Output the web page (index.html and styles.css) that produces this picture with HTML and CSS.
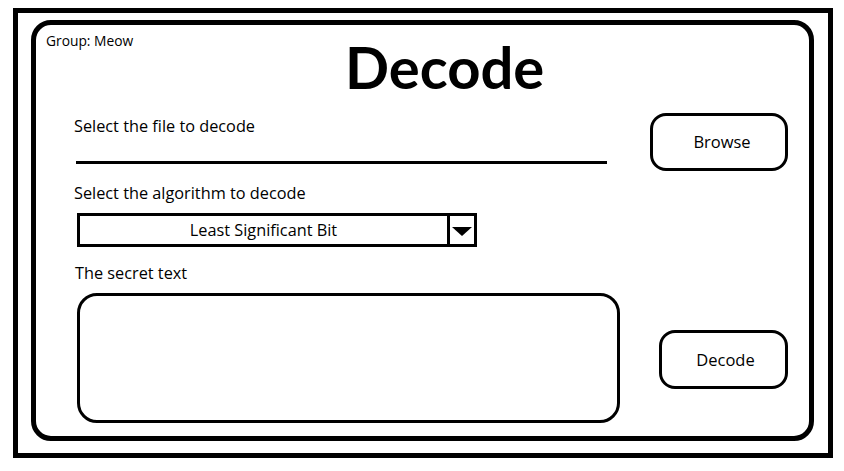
FILE: index.html
```html
<!DOCTYPE html>
<html>
<head>
<meta charset="utf-8">
<link rel="stylesheet" href="styles.css">
</head>
<body>
<div class="frame">
  <div class="panel">
    <div class="header">
      <div class="group">Group: Meow</div>
      <h1 class="title">Decode</h1>
    </div>
    <div class="main">
      <div class="left">
        <div class="label label-file">Select the file to decode</div>
        <div class="file-line"></div>
        <div class="label label-algo">Select the algorithm to decode</div>
        <div class="select">
          <div class="select-value">Least Significant Bit</div>
          <div class="select-arrow"><span class="tri"></span></div>
        </div>
        <div class="label label-secret">The secret text</div>
        <div class="textarea"></div>
      </div>
      <div class="right">
        <div class="btn btn-browse">Browse</div>
        <div class="btn btn-decode">Decode</div>
      </div>
    </div>
  </div>
</div>
</body>
</html>
```
FILE: styles.css
```css
* { box-sizing: border-box; }
html, body { margin: 0; padding: 0; background: #fff; }
body {
  font-family: "Open Sans", Lato, sans-serif;
  color: #000;
}
.frame {
  margin: 8px 0 0 13px;
  width: 820px;
  height: 450px;
  border: 5px solid #000;
  padding: 7px 14px 12px 13px;
}
.panel {
  width: 783px;
  height: 421px;
  border: 5px solid #000;
  border-radius: 20px;
}
.header {
  display: grid;
  grid-template-columns: 309px auto;
  align-items: start;
}
.group {
  font-size: 13.8px;
  line-height: 16px;
  margin-top: 8px;
  padding-left: 10px;
}
.title {
  margin: 13px 0 0 0;
  font-family: Lato, "Open Sans", sans-serif;
  font-size: 58px;
  line-height: 58px;
  font-weight: 700;
}
.main {
  display: flex;
  margin-top: 17px;
  padding-left: 38px;
}
.left {
  width: 546px;
  display: flex;
  flex-direction: column;
}
.label {
  font-size: 16.3px;
  line-height: 19px;
}
.label-file { margin-top: 4px; }
.file-line {
  margin: 25px 0 0 2px;
  width: 531px;
  height: 3px;
  background: #000;
}
.label-algo { margin-top: 20px; }
.select {
  margin: 10px 0 0 3px;
  width: 400px;
  height: 34px;
  border: 3px solid #000;
  display: flex;
}
.select-value {
  flex: 1;
  text-align: center;
  font-size: 16.3px;
  line-height: 29px;
}
.select-arrow {
  width: 27px;
  border-left: 3px solid #000;
  display: flex;
  align-items: center;
  justify-content: center;
}
.tri {
  width: 0;
  height: 0;
  border-left: 10px solid transparent;
  border-right: 10px solid transparent;
  border-top: 9px solid #000;
  margin-top: 2px;
}
.label-secret { margin-top: 17px; margin-left: 1px; }
.textarea {
  margin: 10px 0 0 3px;
  width: 543px;
  height: 130px;
  border: 3px solid #000;
  border-radius: 20px;
}
.right {
  margin-left: 30px;
  width: 138px;
  display: flex;
  flex-direction: column;
  align-items: flex-end;
}
.btn {
  border: 3px solid #000;
  border-radius: 16px;
  display: flex;
  align-items: center;
  justify-content: center;
  font-size: 16.5px;
  line-height: 19px;
}
.btn-browse {
  width: 138px;
  height: 58px;
  padding-left: 6px;
  padding-bottom: 2px;
}
.btn-decode {
  margin-top: 159px;
  width: 129px;
  height: 59px;
  padding-left: 4px;
}
```
